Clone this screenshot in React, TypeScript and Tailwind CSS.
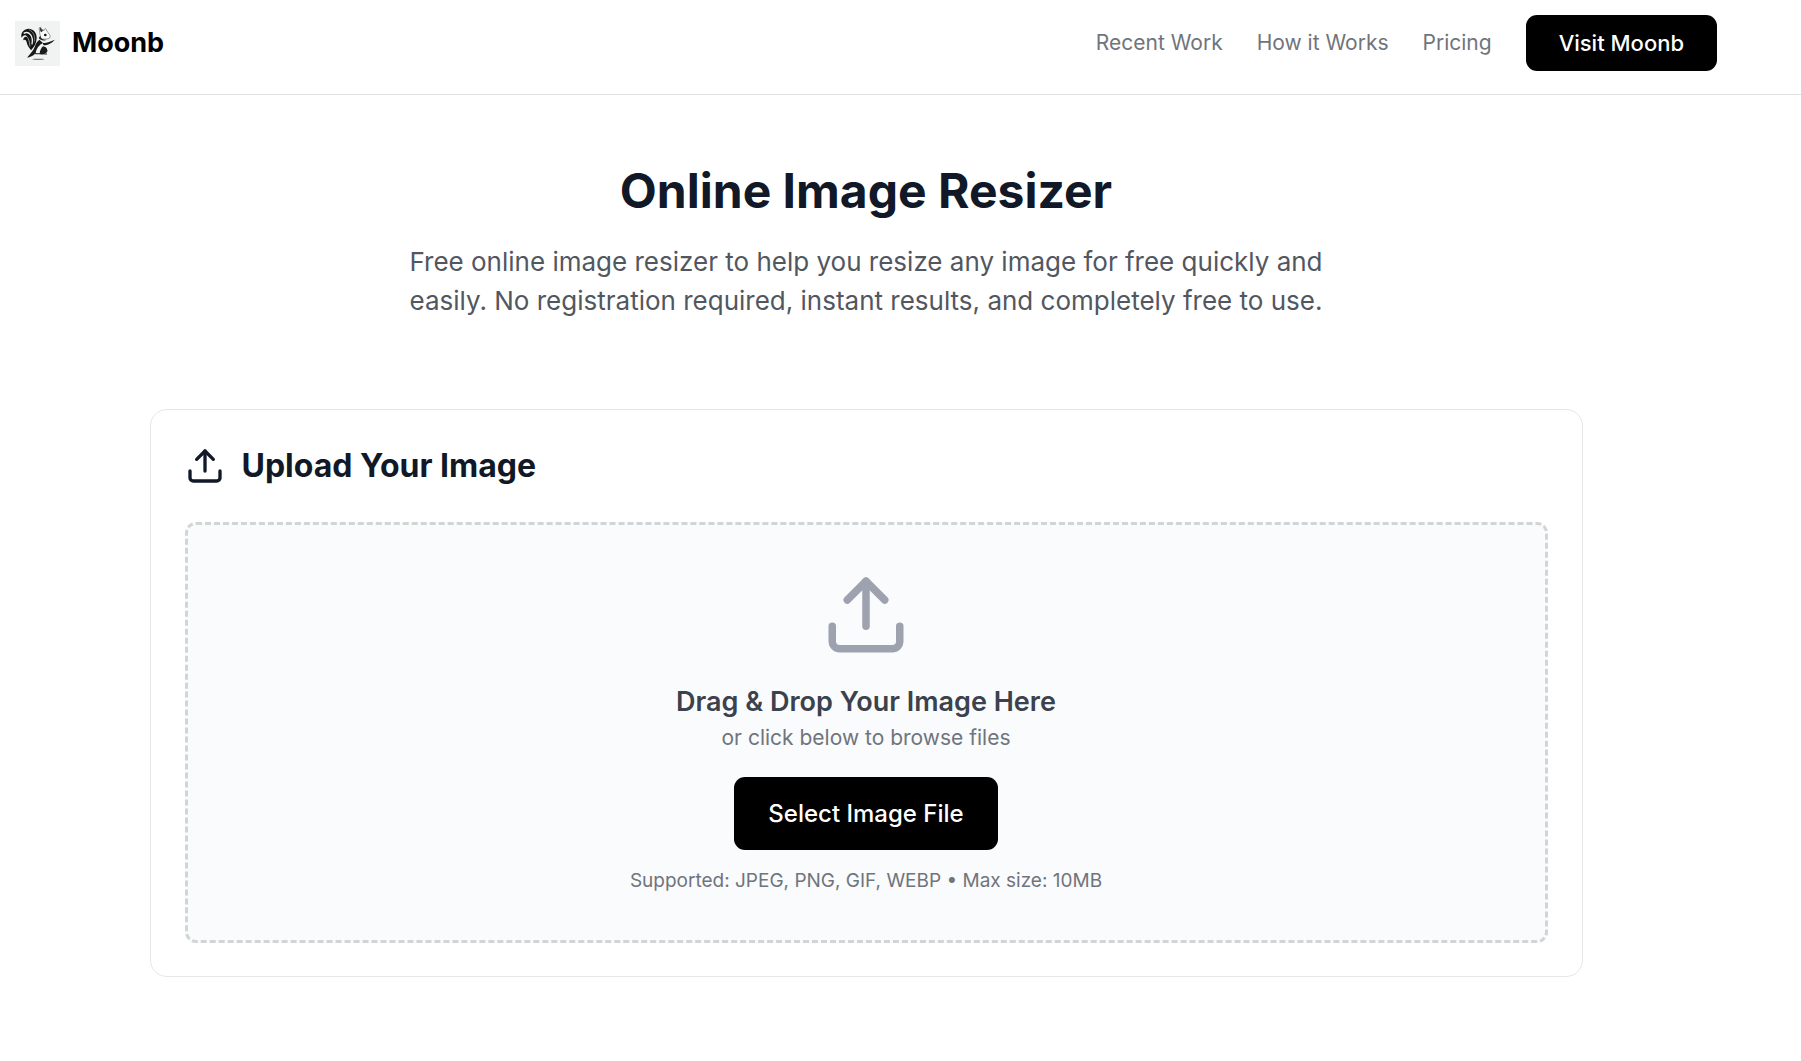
import { useRef } from 'react';
import { Upload } from 'lucide-react';

const navLinks = [
  { label: 'Recent Work', href: '#recent-work' },
  { label: 'How it Works', href: '#how-it-works' },
  { label: 'Pricing', href: '#pricing' },
];

const SquirrelLogo = () => (
  <svg viewBox="0 0 135 135" className="w-[45px] h-[45px] shrink-0 bg-[#f1f3f3]" aria-hidden="true">
    {/* tail */}
    <path
      d="M48 88 C54 80 60 74 62 66 C67 54 66 40 58 31 C50 21 33 20 24 31 C17 39 19 47 20 50 C27 40 34 42 36 48 C30 46 24 50 25 58 C30 54 34 58 35 64 C37 74 42 80 48 88 Z"
      fill="#151515"
    />
    <path d="M26 37 C42 29 56 44 51 70" fill="none" stroke="#f1f3f3" strokeWidth="4" />
    <path d="M42 26 C56 32 61 46 58 62" fill="none" stroke="#a8a8a8" strokeWidth="2" />
    <path d="M33 45 C42 50 43 62 45 76" fill="none" stroke="#d8d8d8" strokeWidth="2" />
    {/* head */}
    <path
      d="M74 30 C71 24 73 20 75 18 C80 22 84 26 86 30 C88 24 90 23 92 23 C95 28 96 32 100 36 C105 41 107 47 104 51 C98 55 92 54 88 54 C82 56 76 52 76 46 C74 40 74 34 74 30 Z"
      fill="#fbfbfb"
      stroke="#666666"
      strokeWidth="2"
    />
    <path d="M75 19 L84 29 L79 34 C75 30 73 24 75 19 Z" fill="#333333" />
    <circle cx="91" cy="42" r="4" fill="#151515" />
    <path d="M76 44 C77 52 84 57 94 56 C86 61 76 58 71 51 Z" fill="#222222" />
    {/* body, arm and legs */}
    <path d="M73 56 C66 61 62 68 59 78 C56 88 46 98 36 110 C48 108 56 104 62 96 C64 82 72 72 84 66 Z" fill="#1a1a1a" />
    <path d="M84 66 C74 72 68 82 66 94 L74 96 C72 86 76 78 84 72 Z" fill="#f8f8f8" />
    <path d="M82 65 C92 68 104 62 119 56 C112 66 98 73 86 73 Z" fill="#1a1a1a" />
    <path d="M84 76 C78 82 74 90 74 98 C84 102 98 98 97 88 C96 80 90 77 84 76 Z" fill="#1a1a1a" />
    <path d="M60 98 L96 99" stroke="#1a1a1a" strokeWidth="3" />
    <ellipse cx="70" cy="115" rx="18" ry="2" fill="#777777" />
  </svg>
);

const Header = () => (
  <header className="border-b border-[#dfe1e3] pr-[69px]">
    <div className="flex items-start justify-between px-[15px] pt-[15px] pb-[23px]">
      <a href="#" className="flex h-14 items-center gap-3">
        <SquirrelLogo />
        <span className="text-[27px] leading-10 font-bold text-black">Moonb</span>
      </a>
      <nav className="flex h-14 items-center gap-[34px]">
        {navLinks.map((link) => (
          <a key={link.label} href={link.href} className="text-[21px] leading-8 text-[#70747c] hover:text-gray-900">
            {link.label}
          </a>
        ))}
        <a
          href="#visit"
          className="flex h-14 items-center rounded-[11px] bg-black px-[33px] text-[22px] leading-8 font-medium text-white"
        >
          Visit Moonb
        </a>
      </nav>
    </div>
  </header>
);

const UploadCard = () => {
  const fileInput = useRef<HTMLInputElement>(null);

  return (
    <section className="rounded-[17px] border border-gray-200 px-[34px] pt-9 pb-[33px]">
      <div className="mb-9 flex items-center gap-[17px]">
        <Upload className="h-10 w-10 text-[#111827]" />
        <h2 className="text-[32px] leading-10 font-bold text-[#111827]">Upload Your Image</h2>
      </div>

      <div className="flex flex-col items-center rounded-[11px] border-3 border-dashed border-[#d2d5d6] bg-[#f9fbfc] px-8 py-[45px] text-center">
        <Upload className="mb-[22px] h-[90px] w-[90px] text-[#9ea2af]" />
        <h3 className="text-[27px] leading-10 font-semibold text-[#3b414d]">Drag &amp; Drop Your Image Here</h3>
        <p className="mb-[23px] text-[21px] leading-8 text-[#70747c]">or click below to browse files</p>
        <input
          ref={fileInput}
          type="file"
          accept="image/*"
          aria-label="Image file"
          className="hidden"
        />
        <button
          type="button"
          onClick={() => fileInput.current?.click()}
          className="mb-[17px] rounded-[11px] bg-black px-[34px] py-[17px] text-[24px] leading-[39px] font-medium text-white"
        >
          Select Image File
        </button>
        <p className="text-[19px] leading-7 text-[#70747c]">Supported: JPEG, PNG, GIF, WEBP • Max size: 10MB</p>
      </div>
    </section>
  );
};

export default function App() {
  return (
    <div className="min-h-screen bg-white font-['Inter',sans-serif]">
      <Header />
      <main className="pr-[69px]">
        <div className="mx-auto max-w-[1433px] pt-[68px]">
          <div className="mb-[89px] text-center">
            <h1 className="mb-[23px] text-[48px] leading-14 font-bold text-[#111827]">Online Image Resizer</h1>
            <p className="mx-auto max-w-[960px] text-[26px] leading-[39px] text-[#52575f]">
              Free online image resizer to help you resize any image for free quickly and easily. No registration
              required, instant results, and completely free to use.
            </p>
          </div>
          <UploadCard />
        </div>
      </main>
    </div>
  );
}
